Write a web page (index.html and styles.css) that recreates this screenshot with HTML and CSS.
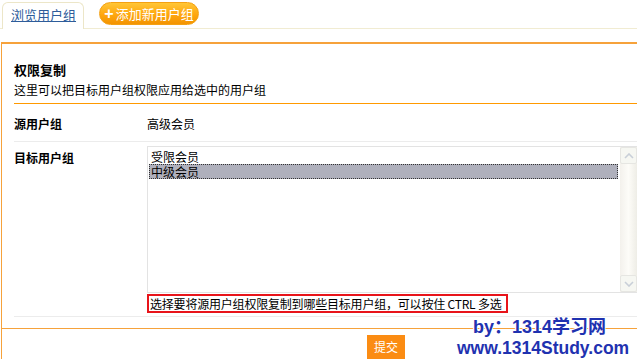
FILE: index.html
```html
<!DOCTYPE html>
<html>
<head>
<meta charset="utf-8">
<link rel="stylesheet" href="styles.css">
</head>
<body>
<div class="tabs">
  <a class="tab" href="#">浏览用户组</a>
  <span class="add-btn"><span class="plus">+</span>添加新用户组</span>
</div>
<div class="panel">
  <div class="head">
    <div class="title">权限复制</div>
    <div class="desc">这里可以把目标用户组权限应用给选中的用户组</div>
  </div>
  <div class="row row-src">
    <div class="label">源用户组</div>
    <div class="value">高级会员</div>
  </div>
  <div class="row row-target">
    <div class="label">目标用户组</div>
    <div class="value">
      <div class="listbox">
        <div class="options">
          <div class="opt">受限会员</div>
          <div class="opt sel">中级会员</div>
        </div>
        <div class="scroll">
          <div class="sbtn up"><svg width="10" height="6" viewBox="0 0 10 6"><path d="M1 5 L5 1 L9 5" fill="none" stroke="#c9cfd8" stroke-width="1.6"/></svg></div>
          <div class="track"></div>
          <div class="sbtn down"><svg width="10" height="6" viewBox="0 0 10 6"><path d="M1 1 L5 5 L9 1" fill="none" stroke="#c9cfd8" stroke-width="1.6"/></svg></div>
        </div>
      </div>
      <div class="hint">选择要将源用户组权限复制到哪些目标用户组，可以按住 CTRL 多选</div>
    </div>
  </div>
  <div class="foot">
    <span class="submit">提交</span>
  </div>
</div>
<div class="watermark">
  <div class="wm1">by：1314学习网</div>
  <div class="wm2">www.1314Study.com</div>
</div>
</body>
</html>
```
FILE: styles.css
```css
* { box-sizing: border-box; }
html, body { margin: 0; padding: 0; }
body {
  width: 637px;
  height: 359px;
  overflow: hidden;
  background: #fff;
  font-family: "Noto Sans CJK SC", "Liberation Sans", sans-serif;
  font-size: 12px;
  color: #000;
  position: relative;
}
.tabs {
  display: flex;
  align-items: flex-start;
  height: 29px;
  border-bottom: 1px solid #f1ecd2;
  padding-top: 2px;
}
.tab {
  display: block;
  margin-left: 2px;
  width: 82px;
  height: 27px;
  border: 1px solid #ece6c8;
  border-bottom: none;
  border-radius: 6px 6px 0 0;
  background: #fff;
  color: #2e5c9a;
  text-decoration: underline;
  font-size: 13px;
  line-height: 24px;
  padding-left: 8px;
}
.add-btn {
  margin-left: 15px;
  width: 100px;
  height: 23px;
  border-radius: 12px;
  background: linear-gradient(#ffc636, #ffa70f 55%, #f39400);
  border: 1px solid #f4a113;
  color: #fff;
  font-size: 13px;
  line-height: 20px;
  display: flex;
  align-items: center;
  justify-content: center;
  gap: 2px;
}
.plus { font-weight: bold; font-size: 16px; font-family: "Liberation Sans", sans-serif; }
.panel {
  margin-top: 13px;
  margin-left: 1px;
  border-top: 2px solid #f6a23b;
  border-left: 1px solid #f6a23b;
  height: 320px;
}
.head {
  margin-left: 12px;
  padding-top: 17px;
  height: 60px;
  border-bottom: 1px solid #ff9900;
}
.title { font-weight: bold; font-size: 13px; line-height: 18px; }
.desc { line-height: 16px; margin-top: 3px; }
.row {
  margin-left: 12px;
  display: grid;
  grid-template-columns: 133px 1fr;
  border-bottom: 1px solid #ececec;
}
.row-src { height: 38px; align-items: center; padding-top: 1px; }
.label { font-weight: bold; }
.row-target { padding-top: 4px; height: 175px; }
.row-target .label { padding-top: 3px; }
.listbox {
  height: 147px;
  border: 1px solid #e3e3e3;
  border-right: none;
  display: flex;
}
.options { flex: 1; padding: 2px 2px 0 1px; }
.opt { height: 15px; line-height: 15px; padding-left: 2px; overflow: hidden; }
.opt.sel {
  background: #afb0bc;
  outline: 1px dotted #333;
  outline-offset: -1px;
}
.scroll {
  width: 17px;
  display: flex;
  flex-direction: column;
  background: linear-gradient(90deg, #f3f1ec, #fdfcf8 50%, #eeede6);
}
.sbtn {
  height: 17px;
  border: 1px solid #e6e6e2;
  border-radius: 2px;
  background: #f6f7f2;
  display: flex;
  align-items: center;
  justify-content: center;
}
.track { flex: 1; }
.hint {
  margin-top: 1px;
  width: 361px;
  height: 19px;
  border: 2px solid #e8141a;
  line-height: 15px;
  padding-left: 1px;
  white-space: nowrap;
  letter-spacing: -0.2px;
}
.foot {
  margin-top: 11px;
  border-top: 1px solid #f6a23b;
  margin-left: -1px;
  display: flex;
  padding-top: 6px;
  padding-left: 366px;
}
.submit {
  display: block;
  width: 38px;
  height: 24px;
  background: #fb8c13;
  color: #fff;
  text-align: center;
  line-height: 24px;
}
.watermark {
  position: absolute;
  left: 457px;
  top: 317px;
  width: 178px;
  font-family: "Liberation Sans", sans-serif;
  font-weight: bold;
  color: #1f32b0;
  white-space: nowrap;
  text-shadow: 1px 0 #fff, -1px 0 #fff, 0 1px #fff, 0 -1px #fff;
}
.wm1 { font-size: 18px; line-height: 21px; padding-left: 16px; font-family: "Liberation Sans", "Noto Sans CJK SC", sans-serif; }
.wm2 { font-size: 17.5px; line-height: 21px; }
```
